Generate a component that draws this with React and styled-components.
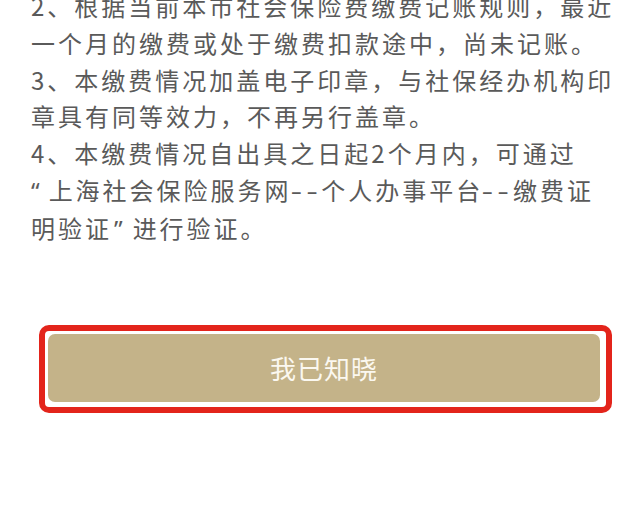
import React from 'react';
import styled, { createGlobalStyle } from 'styled-components';

const lines = [
  ['2、根据当前本市社会保险费缴费记账规则，最近'],
  ['一个月的缴费或处于缴费扣款途中，尚未记账。'],
  ['3、本缴费情况加盖电子印章，与社保经办机构印'],
  ['章具有同等效力，不再另行盖章。'],
  ['4、本缴费情况自出具之日起2个月内，可通过'],
  [{ q: '“' }, '上海社会保险服务网', { d: '--' }, '个人办事平台', { d: '--' }, '缴费证'],
  ['明验证', { q: '”' }, '进行验证。'],
];

const GlobalStyle = createGlobalStyle`
  html, body {
    margin: 0;
    padding: 0;
    background: #ffffff;
    overflow: hidden;
  }
  body {
    font-family: "Noto Sans CJK SC", "Noto Sans", sans-serif;
  }
`;

const Page = styled.div`
  width: 617px;
  height: 512px;
  overflow: hidden;
  display: flex;
  flex-direction: column;
  padding-left: 31px;
  box-sizing: border-box;
`;

const Notes = styled.div`
  margin-top: -12px;
  font-size: 24px;
  letter-spacing: 3px;
  line-height: 36.8px;
  color: #5a5a5a;
`;

const Line = styled.div`
  white-space: nowrap;
`;

const Quote = styled.span`
  font-family: "Noto Sans", sans-serif;
  margin: ${(p) => (p.$close ? '0 7px 0 2px' : '0 6px 0 0')};
`;

const Dash = styled.span`
  display: inline-block;
  letter-spacing: 3px;
  margin: 0 4px 0 3px;
  transform: scaleX(1.4);
`;

const Highlight = styled.div`
  margin-top: 77px;
  margin-left: 8px;
  width: 573px;
  box-sizing: border-box;
  border: 6px solid #e3241b;
  border-radius: 10px;
  padding: 3px 6px 5px 3px;
  display: flex;
`;

const ConfirmButton = styled.button`
  flex: 1;
  height: 68px;
  border: none;
  border-radius: 7px;
  background: #c4b389;
  color: #fbf8f0;
  font-family: "Noto Sans CJK SC", "Noto Sans", sans-serif;
  font-size: 26px;
  letter-spacing: 1px;
  display: flex;
  align-items: center;
  justify-content: center;
  padding: 0;
`;

function Part({ p }) {
  if (typeof p === 'string') return p;
  if (p.d) return <Dash>{p.d}</Dash>;
  return <Quote $close={p.q === '”'}>{p.q}</Quote>;
}

export default function App() {
  return (
    <>
      <GlobalStyle />
      <Page>
        <Notes>
          {lines.map((parts, i) => (
            <Line key={i}>
              {parts.map((p, j) => (
                <Part key={j} p={p} />
              ))}
            </Line>
          ))}
        </Notes>
        <Highlight>
          <ConfirmButton>我已知晓</ConfirmButton>
        </Highlight>
      </Page>
    </>
  );
}
